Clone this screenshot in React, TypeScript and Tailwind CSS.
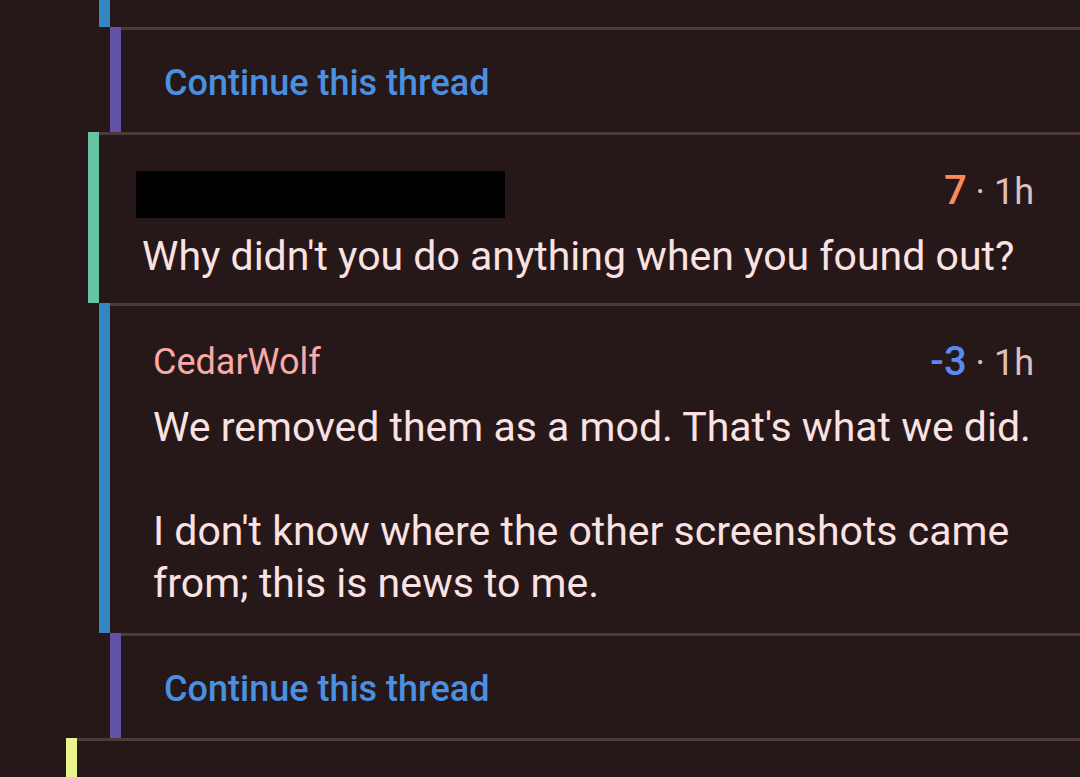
import React from "react";

function Row({
  indent,
  bar,
  border = true,
  className = "",
  children,
}: {
  indent: string;
  bar: string;
  border?: boolean;
  className?: string;
  children?: React.ReactNode;
}) {
  return (
    <div className={"flex " + className}>
      <div className={"shrink-0 " + indent} />
      <div className={"w-[11px] shrink-0 " + bar} />
      <div className={"flex-1 min-w-0 " + (border ? "border-t-[3px] border-[#4d3a3b]" : "")}>
        {children}
      </div>
    </div>
  );
}

function Continue() {
  return (
    <div className="h-[102px] flex items-center pl-[43px] pt-[3px]">
      <span className="text-[36px] font-medium text-[#4a90e0]">Continue this thread</span>
    </div>
  );
}

function Score({ value, color }: { value: string; color: string }) {
  return (
    <div className="flex items-baseline leading-[52px] text-[36px]">
      <span className={"text-[40px] font-medium " + color}>{value}</span>
      <span className="text-[#dcc0bf] whitespace-pre"> · 1h</span>
    </div>
  );
}

export default function App() {
  return (
    <div
      className="w-[1080px] h-[777px] overflow-hidden bg-[#261819] flex flex-col"
      style={{ fontFamily: "Roboto, 'Noto Sans', sans-serif" }}
    >
      <Row indent="w-[99px]" bar="bg-[#3587c2]" border={false} className="h-[27px]" />
      <Row indent="w-[110px]" bar="bg-[#6252a5]">
        <Continue />
      </Row>
      <Row indent="w-[88px]" bar="bg-[#66c4a4]">
        <div className="pl-[43px] pr-[46px] pt-[30px] pb-[21px]">
          <div className="h-[52px] flex items-start justify-between">
            <div className="-ml-[6px] mt-[6px] w-[369px] h-[47px] bg-black" />
            <Score value="7" color="text-[#fb8c5a]" />
          </div>
          <div className="mt-[13px] text-[41px] leading-[52px] text-[#fbe2e2]">
            Why didn't you do anything when you found out?
          </div>
        </div>
      </Row>
      <Row indent="w-[99px]" bar="bg-[#3587c2]">
        <div className="pl-[43px] pr-[46px] pt-[30px] pb-[24px]">
          <div className="h-[52px] flex items-center justify-between leading-[52px]">
            <span className="text-[36px] text-[#f8aaa8]">CedarWolf</span>
            <Score value="-3" color="text-[#5c88f2]" />
          </div>
          <div className="mt-[13px] text-[41px] leading-[52px] text-[#fbe2e2]">
            <p>We removed them as a mod. That's what we did.</p>
            <p className="h-[52px]" />
            <p>I don't know where the other screenshots came from; this is news to me.</p>
          </div>
        </div>
      </Row>
      <Row indent="w-[110px]" bar="bg-[#6252a5]">
        <Continue />
      </Row>
      <Row indent="w-[66px]" bar="bg-[#ebf590]" className="flex-1" />
    </div>
  );
}
